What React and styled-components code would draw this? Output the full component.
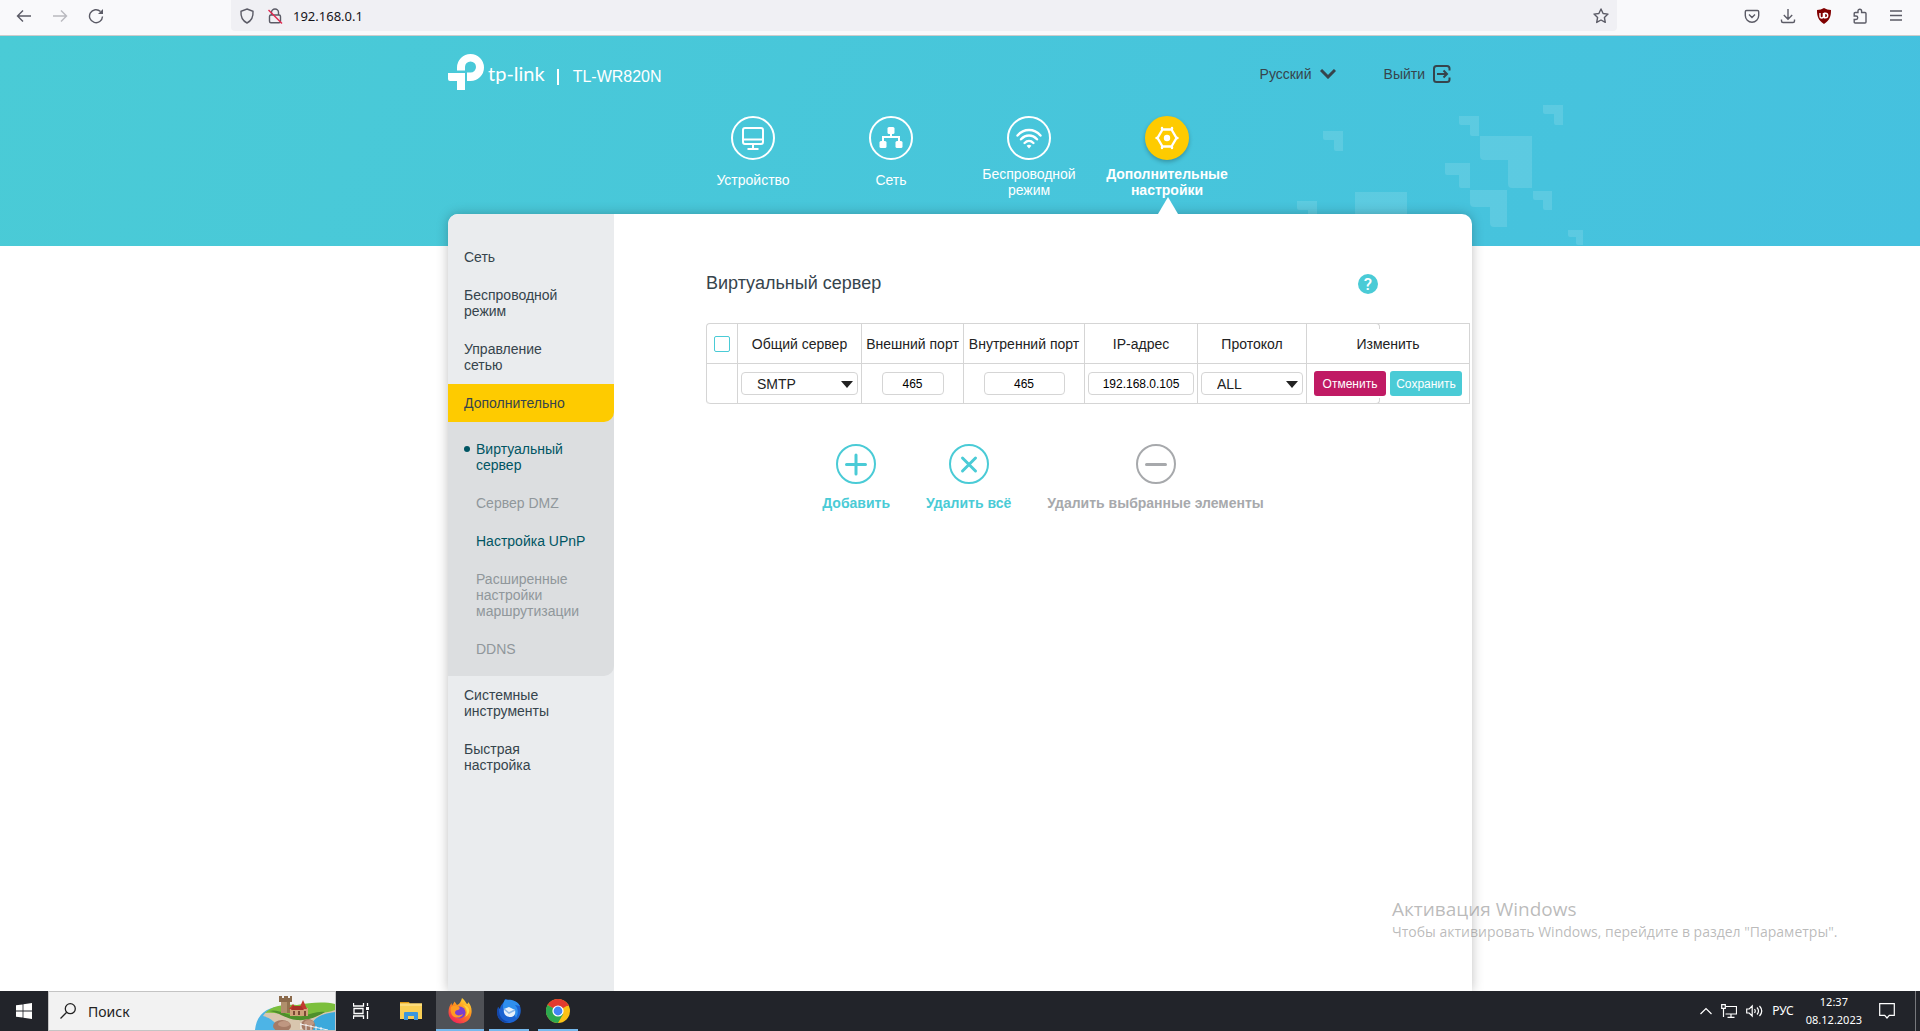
import React, { useState } from "react";
import styled, { createGlobalStyle } from "styled-components";

const navItems = [
    { id: "device", label: ["Устройство"] },
    { id: "network", label: ["Сеть"] },
    { id: "wifi", label: ["Беспроводной", "режим"] },
    { id: "advanced", label: ["Дополнительные", "настройки"] },
]

const sideTop = ["Сеть", "Беспроводной режим", "Управление сетью"]
const sideBottom = ["Системные инструменты", "Быстрая настройка"]

const subItems = [
    { label: "Виртуальный сервер", current: true },
    { label: "Сервер DMZ", disabled: true },
    { label: "Настройка UPnP" },
    { label: "Расширенные настройки маршрутизации", disabled: true },
    { label: "DDNS", disabled: true },
]

// x, y, size of every corner in the header pattern
const corners = [
    [253, 5, 20], [169, 16, 20], [33, 31, 20], [190, 36, 52], [155, 63, 25],
    [180, 90, 37], [243, 91, 19], [278, 130, 15], [7, 101, 20],
]

const cornerPath = (x, y, s) => {
    const arm = Math.round(s * 0.46)
    const inner = Math.round(s * 0.54)
    const r = s > 30 ? 4 : 2
    return `M${x} ${y}h${s}v${s}h${-(s - inner - r)}q${-r} 0 ${-r} ${-r}v${-(s - arm - r)}h${-(inner - r)}q${-r} 0 ${-r} ${-r}z`
}

const NavIcon = ({ id }) => {
    if (id === "device") {
        return (
            <svg width="24" height="26" viewBox="0 0 24 26" fill="none" stroke="#fff" strokeWidth="2">
                <rect x="2" y="3" width="20" height="16" rx="2" />
                <path d="M2 14.5h20M12 19v4M6.500 24h11" />
            </svg>
        )
    }
    if (id === "network") {
        return (
            <svg width="24" height="24" viewBox="0 0 24 24" fill="#fff">
                <rect x="8.500" y="1" width="7" height="7" rx="1.500" />
                <rect x="0.500" y="15" width="7" height="7" rx="1.500" />
                <rect x="16.500" y="15" width="7" height="7" rx="1.500" />
                <path d="M12 7v4M4 16v-5h16v5" fill="none" stroke="#fff" strokeWidth="2" />
            </svg>
        )
    }
    if (id === "wifi") {
        return (
            <svg width="28" height="26" viewBox="0 0 28 26" fill="none" stroke="#fff" strokeWidth="2.400" strokeLinecap="round">
                <path d="M2.500 10.500c6.500-7.300 16.500-7.300 23 0M6 14.300c4.700-5 11.300-5 16 0M9.600 18c2.600-2.600 6.200-2.600 8.800 0" />
                <path d="M14 23.500l-2.400-2.700c1.500-1.300 3.300-1.300 4.800 0z" fill="#fff" stroke="none" />
            </svg>
        )
    }
    return (
        <svg width="24" height="24" viewBox="0 0 24 24" fill="none" stroke="#fff">
            <path d="M7.500 3.500h9l5 8.500-5 8.500h-9l-5-8.500z" strokeWidth="2.400" strokeLinejoin="round" />
            <path d="M7 3v-1M17 3v-1M7 21v1M17 21v1M1.500 12h1M21.500 12h1" strokeWidth="2.400" strokeLinecap="round" />
            <circle cx="12" cy="12" r="3.200" fill="#fff" stroke="none" />
        </svg>
    )
}

const Browser = () => (
    <BrowserBar>
        <BrowserButtons>
            <BarButton aria-label="Назад">
                <svg width="16" height="16" viewBox="0 0 16 16"><path d="M15 8H1.500M7 2.500L1.500 8 7 13.500" /></svg>
            </BarButton>
            <BarButton aria-label="Вперёд" $dim>
                <svg width="16" height="16" viewBox="0 0 16 16"><path d="M1 8h13.500M9 2.500L14.500 8 9 13.500" /></svg>
            </BarButton>
            <BarButton aria-label="Обновить">
                <svg width="16" height="16" viewBox="0 0 16 16">
                    <path d="M12.500 3.500A6.500 6.500 0 1 0 14.500 8.500" />
                    <path d="M15 1v5h-5z" fill="#5b5b66" stroke="none" />
                </svg>
            </BarButton>
        </BrowserButtons>
        <AddressBox>
            <svg width="16" height="16" viewBox="0 0 16 16">
                <path d="M8 1l6 2.300c.4 5.200-1.800 9.700-6 11.700C3.800 13 1.600 8.500 2 3.300z" />
            </svg>
            <svg width="16" height="16" viewBox="0 0 16 16">
                <path d="M4.500 7V4.500a3.500 3.500 0 0 1 7 0V7" />
                <rect x="2.500" y="7" width="11" height="7.800" rx="1.500" />
                <path d="M1.500 2L15 15.500" stroke="#e22850" />
            </svg>
            <Address aria-label="Адрес" defaultValue="192.168.0.1" />
            <svg width="16" height="16" viewBox="0 0 16 16">
                <path d="M8 1l2.100 4.500 4.900.6-3.600 3.400.9 4.900L8 12l-4.300 2.400.9-4.900L1 6.100l4.900-.6z" strokeLinejoin="round" />
            </svg>
        </AddressBox>
        <BrowserTools>
            <BarButton aria-label="Pocket">
                <svg width="16" height="16" viewBox="0 0 16 16">
                    <path d="M2.500 2.500h11q1.200 0 1.200 1.200V7.500a6.700 6.700 0 0 1-13.400 0V3.700q0-1.200 1.200-1.200zM5 6.500l3 3 3-3" />
                </svg>
            </BarButton>
            <BarButton aria-label="Загрузки">
                <svg width="16" height="16" viewBox="0 0 16 16">
                    <path d="M8 1v10M3.800 7L8 11.200 12.200 7M1.500 11.500V13q0 1.500 1.500 1.500h10q1.500 0 1.500-1.500v-1.500" />
                </svg>
            </BarButton>
            <BarButton aria-label="uBlock">
                <svg width="16" height="16" viewBox="0 0 16 16">
                    <path d="M8 0q3 2 7 2c0 6-1 10-7 14C2 12 1 8 1 2q4 0 7-2z" fill="#800000" stroke="none" />
                    <path d="M4 5v3q0 2 1.700 2t1.700-2V5M8.500 5.300h1a2.200 2.200 0 0 1 0 4.500h-1z" stroke="#fff" />
                </svg>
            </BarButton>
            <BarButton aria-label="Расширения">
                <svg width="16" height="16" viewBox="0 0 16 16">
                    <path d="M6 4.500V3a1.800 1.800 0 0 1 3.600 0v1.500H13q1 0 1 1V14q0 1-1 1H3.200q-1 0-1-1v-2.500H4a1.700 1.700 0 0 0 0-3.500H2.200V5.500q0-1 1-1z" />
                </svg>
            </BarButton>
            <BarButton aria-label="Меню">
                <svg width="16" height="16" viewBox="0 0 16 16"><path d="M2 3h12M2 7.500h12M2 12h12" /></svg>
            </BarButton>
        </BrowserTools>
    </BrowserBar>
)

const SelectBox = ({ label, options }) => (
    <SelectWrap>
        <CellSelect aria-label={label}>
            {options.map((o) => <option key={o}>{o}</option>)}
        </CellSelect>
        <svg width="12" height="7" viewBox="0 0 12 7"><path d="M0 0h12L6 7z" fill="#222" /></svg>
    </SelectWrap>
)

const Taskbar = () => (
    <TaskbarRow>
        <StartButton aria-label="Пуск">
            <svg width="16" height="16" viewBox="0 0 16 16" fill="#fff">
                <path d="M0 2.300l6.600-.9v6.200H0zM7.400 1.300L16 0v7.600H7.400zM0 8.400h6.600v6.200L0 13.700zM7.400 8.400H16V16l-8.600-1.300z" />
            </svg>
        </StartButton>
        <SearchBox>
            <svg width="16" height="16" viewBox="0 0 16 16" fill="none" stroke="#222" strokeWidth="1.300">
                <circle cx="10.300" cy="5.700" r="5" /><path d="M6.700 9.300L.5 15.500" />
            </svg>
            <SearchInput aria-label="Поиск" placeholder="Поиск" />
            <svg width="80" height="38" viewBox="0 0 80 38">
                <path d="M0 38C2 20 14 14 32 14L80 12v26z" fill="#4db4e6" />
                <path d="M8 24C14 14 24 15 36 16c16 3 30 0 44-3v9c-10 0-22 6-18 16H24c-2-7-8-12-16-14z" fill="#d8c6ae" />
                <path d="M10 21c8-8 20-9 32-8 12-2 26-4 38-1v6c-10 4-18 2-26 6-12 5-26-5-44-3z" fill="#7cbf3c" />
                <path d="M14 19c10-3 22 7 34 5 8-2 14-5 22-4-8 5-18 9-28 8-12-1-18-8-28-9z" fill="#4e8f2b" />
                <path d="M80 20c-16 2-26 8-22 18h22z" fill="#3ba9dc" />
                <path d="M26 9h9v12H26z" fill="#b08f6c" />
                <path d="M24 4h3v2h2V4h4v2h2V4h2v6H24z" fill="#8b6a4c" />
                <path d="M32 10h3v11h-3z" fill="#92734f" />
                <path d="M35 16h18v8H35z" fill="#d1a27a" />
                <path d="M34 17l4-5 4 5zM44 17l4-9 4 9z" fill="#c2392e" />
                <path d="M38 14h8l3 4H36z" fill="#a93228" />
                <path d="M38 19h2v4h-2zM43 19h2v4h-2zM49 19h2v5h-2z" fill="#7c4a35" />
                <ellipse cx="27" cy="34" rx="9" ry="6" fill="#a57b66" />
                <ellipse cx="29" cy="32" rx="6" ry="3" fill="#bf9781" />
                <ellipse cx="53" cy="33" rx="7" ry="6" fill="#a57b66" />
                <ellipse cx="54" cy="31" rx="5" ry="3" fill="#bf9781" />
                <path d="M45 32l28 6M46 31v6M51 32v6M56 33v5M61 34v4M66 35v3" stroke="#f4f4f4" fill="none" />
            </svg>
        </SearchBox>
        <TaskButton aria-label="Представление задач">
            <svg width="16" height="18" viewBox="0 0 16 18" fill="none" stroke="#fff" strokeWidth="1.300">
                <path d="M.5 1v3h10V1M.5 17v-3h10v3M1 6.500h9v5H1zM14.500 1v3M14.500 9v8" />
                <path d="M13 5h3v3h-3z" fill="#fff" stroke="none" />
            </svg>
        </TaskButton>
        <TaskButton aria-label="Проводник">
            <svg width="24" height="20" viewBox="0 0 24 20">
                <path d="M1 1h9l1 2h-10z" fill="#e09a12" />
                <path d="M1 2.500h22V18H1z" fill="#f9cf55" />
                <path d="M1 2.500h22V5H1z" fill="#fbdc7c" />
                <path d="M5 19v-7q0-1 1-1h12q1 0 1 1v7h-4v-4H9v4z" fill="#3a96dd" />
            </svg>
        </TaskButton>
        <TaskButton aria-label="Firefox" $active>
            <svg width="24" height="26" viewBox="0 0 24 26">
                <defs>
                    <linearGradient id="fox" x1="0.800" y1="0" x2="0.200" y2="1">
                        <stop offset="0" stopColor="#ffe23a" /><stop offset=".45" stopColor="#ff8a1c" /><stop offset="1" stopColor="#f2195f" />
                    </linearGradient>
                </defs>
                <path d="M14 0c3 2 4 5 5 6 1 0 1-1 1-2 3 3 4 7 3.500 11C22.500 21.500 18 25.500 12 25.500S0.500 20.500.5 14c0-4 1.500-7 3-9l.5 2.500C5 6 6 5 6.500 3.500L9 7c3-1 4-4 5-7z" fill="url(#fox)" />
                <circle cx="11.500" cy="14.500" r="6" fill="#7b3fd0" />
                <path d="M3 9c3-2 6-1 8 0 1 1 1 2-1 3-2 0-3 1-3 3 1 3 5 3 8 1-1 4-8 5-11 1C3 15 2 12 3 9z" fill="#ff9b22" />
                <path d="M15 7c4 3 5 8 2 12 6-3 6-11-2-12z" fill="#ffd43a" />
            </svg>
        </TaskButton>
        <AppGroup>
            <TaskButton aria-label="Thunderbird" $open>
                <svg width="24" height="26" viewBox="0 0 24 26">
                    <path d="M7 4l1-3c2 0 3 1 4 2 5-1 9 1 11 5 2 6 0 12-5 15-6 4-14 2-17-4-1-3-1-7 0-10l2 2c0-3 2-5 4-7z" fill="#1b62d1" />
                    <path d="M8 2c5-1 12 0 15 6l-5-1c3 3 4 8 1 13-2-6-7-9-13-9 0-4 0-7 2-9z" fill="#2f8fee" />
                    <path d="M7 11l5-2 6 3c1 4-1 7-5 7s-7-3-6-8z" fill="#e9f1fb" />
                    <path d="M7 11l5 4 6-3" fill="none" stroke="#8bb7ea" strokeWidth="1.500" />
                    <path d="M2 9c-1 8 3 14 10 15C6 26-1 21 0 12z" fill="#1447a8" />
                </svg>
            </TaskButton>
            <TaskButton aria-label="Chrome" $open>
                <svg width="24" height="24" viewBox="0 0 24 24">
                    <circle cx="12" cy="12" r="12" fill="#fbc116" />
                    <path d="M12 12L1.600 6A12 12 0 0 1 22.400 6z" fill="#e33b2e" />
                    <path d="M12 12L1.600 6A12 12 0 0 0 12 24l5.200-9z" fill="#2da94f" />
                    <path d="M12 6.500h10.600" stroke="#e33b2e" />
                    <circle cx="12" cy="12" r="5.600" fill="#fff" />
                    <circle cx="12" cy="12" r="4.400" fill="#4285f4" />
                </svg>
            </TaskButton>
        </AppGroup>
        <Tray>
            <svg width="12" height="8" viewBox="0 0 12 8"><path d="M.5 7L6 1.500 11.500 7" /></svg>
            <svg width="16" height="14" viewBox="0 0 16 14">
                <path d="M5 2.500h10.500v7.500H4.500M10 10v3M6.500 13.300h7M.7.700h3.600v3.600H.7zM2.500 4.500V13" />
            </svg>
            <svg width="17" height="14" viewBox="0 0 17 14">
                <path d="M.7 5v4h2.500l3 3V2l-3 3zM8.500 5q1.500 2 0 4M11 3.500q3 3.500 0 7M13.500 2q4.500 5 0 10" />
            </svg>
            <Lang>РУС</Lang>
            <Clock><span>12:37</span><span>08.12.2023</span></Clock>
            <NoticeButton aria-label="Уведомления">
                <svg width="16" height="16" viewBox="0 0 16 16"><path d="M.7.700h14.600v11.600h-5L8 15l-2.300-2.700h-5z" /></svg>
            </NoticeButton>
        </Tray>
    </TaskbarRow>
)

const App = () => {
    const [active, setActive] = useState("advanced")

    return (
        <Screen>
            <GlobalStyle />
            <Browser />
            <Viewport>
                <Header>
                    <Pattern width="300" height="146" viewBox="0 0 300 146">
                        {corners.map(([x, y, s]) => <path key={`${x}-${y}`} d={cornerPath(x, y, s)} />)}
                        <path d="M65 92h52v52h-52z" />
                    </Pattern>
                    <HeaderInner>
                        <TopRow>
                            <Logo>
                                <svg width="36" height="36" viewBox="0 0 36 36" fill="#fff">
                                    <path d="M9 16.500V13.500a13.500 13.500 0 1 1 13.500 13.500H19V18.500h3.500a5.500 5.500 0 1 0-5.500-5.500v3.500z" />
                                    <path d="M0 19h17v17H9v-9H2q-2 0-2-2z" />
                                </svg>
                                <Wordmark>tp-link</Wordmark>
                            </Logo>
                            <Model>TL-WR820N</Model>
                            <TopLinks>
                                <LangWrap>
                                    <LangSelect aria-label="Язык"><option>Русский</option></LangSelect>
                                    <svg width="16" height="10" viewBox="0 0 16 10" fill="none" stroke="#36444c" strokeWidth="3">
                                        <path d="M1 1l7 7 7-7" />
                                    </svg>
                                </LangWrap>
                                <Logout href="#logout">
                                    Выйти
                                    <svg width="18" height="18" viewBox="0 0 18 18" fill="none" stroke="#36444c" strokeWidth="2">
                                        <path d="M16.500 5.500V3.500q0-2.500-2.500-2.500H3.500Q1 1 1 3.500v11Q1 17 3.500 17H14q2.500 0 2.500-2.500v-2M4 9h10M10.500 5.500L14 9l-3.500 3.500" />
                                    </svg>
                                </Logout>
                            </TopLinks>
                        </TopRow>
                        <Nav>
                            {navItems.map((item) => (
                                <NavLink
                                    key={item.id}
                                    href={`#${item.id}`}
                                    $active={active === item.id}
                                    onClick={() => setActive(item.id)}
                                >
                                    <NavCircle $active={active === item.id}><NavIcon id={item.id} /></NavCircle>
                                    <NavLabel $single={item.label.length === 1}>
                                        {item.label.map((line) => <span key={line}>{line}</span>)}
                                    </NavLabel>
                                </NavLink>
                            ))}
                        </Nav>
                    </HeaderInner>
                </Header>

                <Panel>
                    <Sidebar>
                        {sideTop.map((label) => <SideLink href="#menu" key={label}>{label}</SideLink>)}
                        <SideLink href="#menu" $active>Дополнительно</SideLink>
                        <SubMenu>
                            {subItems.map((item) => (
                                <SubLink href="#menu" key={item.label} $current={item.current} $disabled={item.disabled}>
                                    {item.label}
                                </SubLink>
                            ))}
                        </SubMenu>
                        {sideBottom.map((label) => <SideLink href="#menu" key={label}>{label}</SideLink>)}
                    </Sidebar>

                    <Content>
                        <TitleRow>
                            <Title>Виртуальный сервер</Title>
                            <HelpButton>?</HelpButton>
                        </TitleRow>
                        <TableFrame>
                            <Table>
                                <thead>
                                    <tr>
                                        <Th $width={31}><CheckBox type="checkbox" aria-label="Выбрать все" /></Th>
                                        <Th $width={124}>Общий сервер</Th>
                                        <Th $width={102}>Внешний порт</Th>
                                        <Th $width={121}>Внутренний порт</Th>
                                        <Th $width={113}>IP-адрес</Th>
                                        <Th $width={109}>Протокол</Th>
                                        <Th $width={163}>Изменить</Th>
                                    </tr>
                                </thead>
                                <tbody>
                                    <tr>
                                        <Td />
                                        <Td><SelectBox label="Общий сервер" options={["SMTP", "HTTP", "FTP"]} /></Td>
                                        <Td><CellInput aria-label="Внешний порт" defaultValue="465" $width={62} /></Td>
                                        <Td><CellInput aria-label="Внутренний порт" defaultValue="465" $width={81} /></Td>
                                        <Td><CellInput aria-label="IP-адрес" defaultValue="192.168.0.105" $width={106} /></Td>
                                        <Td><SelectBox label="Протокол" options={["ALL", "TCP", "UDP"]} /></Td>
                                        <Td>
                                            <RowButtons>
                                                <RowButton $color="#c01a64">Отменить</RowButton>
                                                <RowButton $color="#4acbd6">Сохранить</RowButton>
                                            </RowButtons>
                                        </Td>
                                    </tr>
                                </tbody>
                            </Table>
                        </TableFrame>
                        <Actions>
                            <ActionButton>
                                <svg width="40" height="40" viewBox="0 0 40 40">
                                    <circle cx="20" cy="20" r="19" /><path d="M10.500 20.500h19M20 11v19" />
                                </svg>
                                Добавить
                            </ActionButton>
                            <ActionButton>
                                <svg width="40" height="40" viewBox="0 0 40 40">
                                    <circle cx="20" cy="20" r="19" /><path d="M13.500 14l13 13M26.500 14l-13 13" />
                                </svg>
                                Удалить всё
                            </ActionButton>
                            <ActionButton disabled>
                                <svg width="40" height="40" viewBox="0 0 40 40">
                                    <circle cx="20" cy="20" r="19" /><path d="M10.500 20.500h19" />
                                </svg>
                                Удалить выбранные элементы
                            </ActionButton>
                        </Actions>
                    </Content>
                </Panel>
            </Viewport>
            <Watermark>
                <WatermarkTitle>Активация Windows</WatermarkTitle>
                <WatermarkText>Чтобы активировать Windows, перейдите в раздел "Параметры".</WatermarkText>
            </Watermark>
            <Taskbar />
        </Screen>
    )
}

export default App

const GlobalStyle = createGlobalStyle`
  * {
    box-sizing:border-box;
  }
  body {
    margin:0;
    font-family:"Liberation Sans", Arial, sans-serif;
    font-size:14px;
    line-height:16px;
    color:#36444c;
    background:#fff;
  }
  a {
    color:inherit;
    text-decoration:none;
  }
  button, input, select {
    margin:0;
    padding:0;
    border:0;
    background:none;
    font-family:inherit;
    color:inherit;
  }
  svg {
    display:block;
    flex:none;
  }
`

const Screen = styled.div`
  position:relative;
  display:flex;
  flex-direction:column;
  height:100vh;
  overflow:hidden;
`

const BrowserBar = styled.div`
  display:flex;
  flex:none;
  height:36px;
  background:#f9f9fb;
  border-bottom:1px solid #ccc;
  svg {
    fill:none;
    stroke:#5b5b66;
    stroke-width:1.4;
  }
`

const BrowserButtons = styled.div`
  display:flex;
  gap:20px;
  width:231px;
  height:32px;
  padding-left:16px;
`

const BarButton = styled.button`
  display:flex;
  align-items:center;
  opacity:${(props) => props.$dim ? 0.4 : 1};
`

const AddressBox = styled.div`
  display:flex;
  flex:1;
  align-items:center;
  gap:12px;
  height:31px;
  padding:0 8px;
  background:#f0f0f4;
  border-radius:0 0 4px 4px;
`

const Address = styled.input`
  flex:1;
  height:24px;
  margin-left:-2px;
  outline:none;
  font-family:"Noto Sans", sans-serif;
  font-size:13px;
  color:#15141a;
`

const BrowserTools = styled.div`
  display:flex;
  justify-content:flex-end;
  gap:20px;
  width:303px;
  height:31px;
  padding-right:16px;
`

const Viewport = styled.div`
  display:flex;
  flex:1;
  flex-direction:column;
  min-height:0;
  overflow:hidden;
`

const Header = styled.div`
  position:relative;
  flex:none;
  height:210px;
  background:linear-gradient(115deg, #4acbd6, #45c1df);
`

const Pattern = styled.svg`
  position:absolute;
  top:64px;
  left:50%;
  margin-left:330px;
  fill:rgba(255, 255, 255, 0.12);
`

const HeaderInner = styled.div`
  position:relative;
  z-index:2;
  max-width:1024px;
  margin:0 auto;
  padding-top:18px;
`

const TopRow = styled.div`
  display:flex;
  align-items:center;
  height:36px;
  padding-right:21px;
`

const Logo = styled.div`
  display:flex;
  align-items:center;
  gap:4px;
`

const Wordmark = styled.span`
  font-family:Lato, sans-serif;
  font-size:20px;
  line-height:36px;
  padding-top:2px;
  color:#fff;
`

const Model = styled.div`
  margin:10px 0 0 12px;
  padding-left:14px;
  border-left:2px solid #fff;
  font-size:16px;
  color:#fff;
`

const TopLinks = styled.div`
  display:flex;
  gap:48px;
  margin:4px 0 0 auto;
`

const LangWrap = styled.div`
  position:relative;
  svg {
    position:absolute;
    top:4px;
    right:0;
    pointer-events:none;
  }
`

const LangSelect = styled.select`
  appearance:none;
  height:18px;
  padding-right:24px;
  font-size:14px;
  outline:none;
`

const Logout = styled.a`
  display:flex;
  align-items:center;
  gap:8px;
`

const Nav = styled.nav`
  display:flex;
  justify-content:center;
  margin-top:26px;
`

const NavLink = styled.a`
  position:relative;
  display:flex;
  flex-direction:column;
  align-items:center;
  width:138px;
  height:98px;
  color:#fff;
  font-weight:${(props) => props.$active ? "bold" : "normal"};
  &::after {
    content:"";
    display:${(props) => props.$active ? "block" : "none"};
    position:absolute;
    bottom:0;
    left:60px;
    border:solid transparent;
    border-width:0 10px 17px;
    border-bottom-color:#fff;
  }
`

const NavCircle = styled.span`
  display:flex;
  align-items:center;
  justify-content:center;
  width:44px;
  height:44px;
  border:2px solid ${(props) => props.$active ? "#fecb00" : "#fff"};
  border-radius:50%;
  background:${(props) => props.$active ? "#fecb00" : "transparent"};
  box-shadow:${(props) => props.$active ? "0 2px 4px rgba(0, 0, 0, 0.25)" : "none"};
`

const NavLabel = styled.span`
  display:flex;
  flex-direction:column;
  align-items:center;
  margin-top:${(props) => props.$single ? 12 : 6}px;
`

const Panel = styled.div`
  position:relative;
  z-index:1;
  display:flex;
  flex:1;
  width:100%;
  max-width:1024px;
  margin:-32px auto 0;
  background:#fff;
  border-radius:10px 10px 0 0;
  box-shadow:0 0 12px rgba(0, 0, 0, 0.25);
`

const Sidebar = styled.div`
  flex:none;
  width:166px;
  padding-top:24px;
  background:#eaecee;
  border-radius:10px 0 0 0;
`

const SideLink = styled.a`
  display:block;
  padding:11px 48px 11px 16px;
  ${(props) => props.$active && `
    padding-right:16px;
    background:#fecb00;
    border-radius:0 0 10px 0;
  `}
`

const SubMenu = styled.div`
  padding:8px 0;
  background:#dcdee0;
  border-radius:0 0 10px 0;
  box-shadow:0 -10px 0 #dcdee0;
  ${SideLink} + & {
    position:relative;
    z-index:0;
  }
  ${SideLink}:has(+ &) {
    position:relative;
    z-index:1;
  }
`

const SubLink = styled.a`
  position:relative;
  display:block;
  padding:11px 24px 11px 28px;
  color:${(props) => props.$disabled ? "#90979b" : "#005563"};
  &::before {
    content:"";
    display:${(props) => props.$current ? "block" : "none"};
    position:absolute;
    top:16px;
    left:16px;
    width:6px;
    height:6px;
    border-radius:50%;
    background:#005563;
  }
`

const Content = styled.div`
  flex:1;
  min-width:0;
  padding:60px 92px 0;
`

const TitleRow = styled.div`
  display:flex;
  align-items:center;
  justify-content:space-between;
  height:20px;
  padding-right:2px;
`

const Title = styled.h1`
  margin:0;
  padding-bottom:2px;
  font-size:18px;
  line-height:20px;
  font-weight:normal;
`

const HelpButton = styled.button`
  width:20px;
  height:20px;
  border-radius:50%;
  background:#4acbd6;
  color:#fff;
  font-family:Roboto, sans-serif;
  font-size:17px;
  line-height:20px;
  font-weight:500;
`

const TableFrame = styled.div`
  position:relative;
  margin-top:29px;
  &::before, &::after {
    content:"";
    position:absolute;
    right:0;
    width:4px;
    height:5px;
    background:#fff;
    border:0 solid #d5d5d5;
  }
  &::before {
    top:0;
    border-width:1px 1px 0 0;
    border-top-right-radius:4px;
  }
  &::after {
    bottom:0;
    border-width:0 1px 1px 0;
    border-bottom-right-radius:4px;
  }
`

const Table = styled.table`
  table-layout:fixed;
  width:764px;
  border:solid #d5d5d5;
  border-width:1px 0 0 1px;
  border-radius:4px 0 0 4px;
  border-spacing:0;
  color:#222;
`

const Th = styled.th`
  width:${(props) => props.$width}px;
  height:40px;
  padding:0;
  border:solid #d5d5d5;
  border-width:0 1px 1px 0;
  font-weight:normal;
  white-space:nowrap;
`

const Td = styled.td`
  height:40px;
  padding:0 3px;
  border:solid #d5d5d5;
  border-width:0 1px 1px 0;
  text-align:center;
  &:first-child {
    border-bottom-left-radius:4px;
  }
`

const CheckBox = styled.input`
  appearance:none;
  display:block;
  width:16px;
  height:16px;
  margin:0 auto;
  border:1px solid #4acbd6;
  border-radius:2px;
  &:checked {
    background:#4acbd6;
  }
`

const CellInput = styled.input`
  display:block;
  width:${(props) => props.$width}px;
  height:23px;
  margin:0 auto;
  border:1px solid #d5d5d5;
  border-radius:4px;
  font-size:12px;
  text-align:center;
  color:#000;
`

const SelectWrap = styled.div`
  position:relative;
  svg {
    position:absolute;
    top:9px;
    right:5px;
    pointer-events:none;
  }
`

const CellSelect = styled.select`
  appearance:none;
  display:block;
  width:100%;
  height:23px;
  padding-left:15px;
  border:1px solid #d5d5d5;
  border-radius:4px;
  font-size:14px;
`

const RowButtons = styled.div`
  display:flex;
  justify-content:center;
  gap:4px;
`

const RowButton = styled.button`
  width:72px;
  height:25px;
  border-radius:3px;
  background:${(props) => props.$color};
  color:#fff;
  font-size:12px;
`

const Actions = styled.div`
  display:flex;
  justify-content:center;
  gap:36px;
  margin-top:40px;
`

const ActionButton = styled.button`
  display:flex;
  flex-direction:column;
  align-items:center;
  gap:11px;
  font-size:14px;
  line-height:16px;
  font-weight:bold;
  white-space:nowrap;
  color:#4acbd6;
  &:disabled {
    color:#a7a9ac;
  }
  svg {
    fill:none;
    stroke:currentColor;
    stroke-width:2;
  }
  path {
    stroke-width:3;
    stroke-linecap:round;
  }
`

const Watermark = styled.div`
  position:absolute;
  right:72px;
  bottom:89px;
  z-index:3;
  width:456px;
  font-family:"Open Sans", sans-serif;
  color:rgba(120, 120, 120, 0.5);
  white-space:nowrap;
  pointer-events:none;
`

const WatermarkTitle = styled.div`
  font-size:19px;
  line-height:26px;
`

const WatermarkText = styled.div`
  font-size:14px;
  line-height:20px;
`

const TaskbarRow = styled.div`
  display:flex;
  flex:none;
  height:40px;
  background:#22242a;
  color:#fff;
  font-family:"Noto Sans", sans-serif;
`

const StartButton = styled.button`
  display:flex;
  align-items:center;
  justify-content:center;
  width:48px;
`

const SearchBox = styled.div`
  display:flex;
  align-items:center;
  width:288px;
  padding-left:11px;
  background:#f2f2f2;
  border:1px solid #c4c4c4;
  color:#222;
`

const SearchInput = styled.input`
  flex:1;
  min-width:0;
  margin-left:12px;
  font-size:14px;
  outline:none;
  &::placeholder {
    color:#222;
    opacity:1;
  }
`

const TaskButton = styled.button`
  display:flex;
  align-items:center;
  justify-content:center;
  width:${(props) => props.$open ? 40 : props.$active ? 48 : 50}px;
  background:${(props) => props.$active ? "#4f5156" : "none"};
  border-top:2px solid transparent;
  border-bottom:2px solid ${(props) => props.$open || props.$active ? "#76b9ed" : "transparent"};
`

const AppGroup = styled.div`
  display:flex;
  gap:9px;
  margin-left:5px;
`

const Tray = styled.div`
  display:flex;
  align-items:center;
  gap:9px;
  margin-left:auto;
  margin-right:4px;
  padding-right:20px;
  border-right:1px solid #77787c;
  svg {
    fill:none;
    stroke:#fff;
    stroke-width:1.2;
  }
`

const Lang = styled.span`
  font-size:12px;
`

const Clock = styled.span`
  display:flex;
  flex-direction:column;
  align-items:center;
  margin:0 8px 0 3px;
  font-size:11px;
  line-height:18px;
`

const NoticeButton = styled.button``
